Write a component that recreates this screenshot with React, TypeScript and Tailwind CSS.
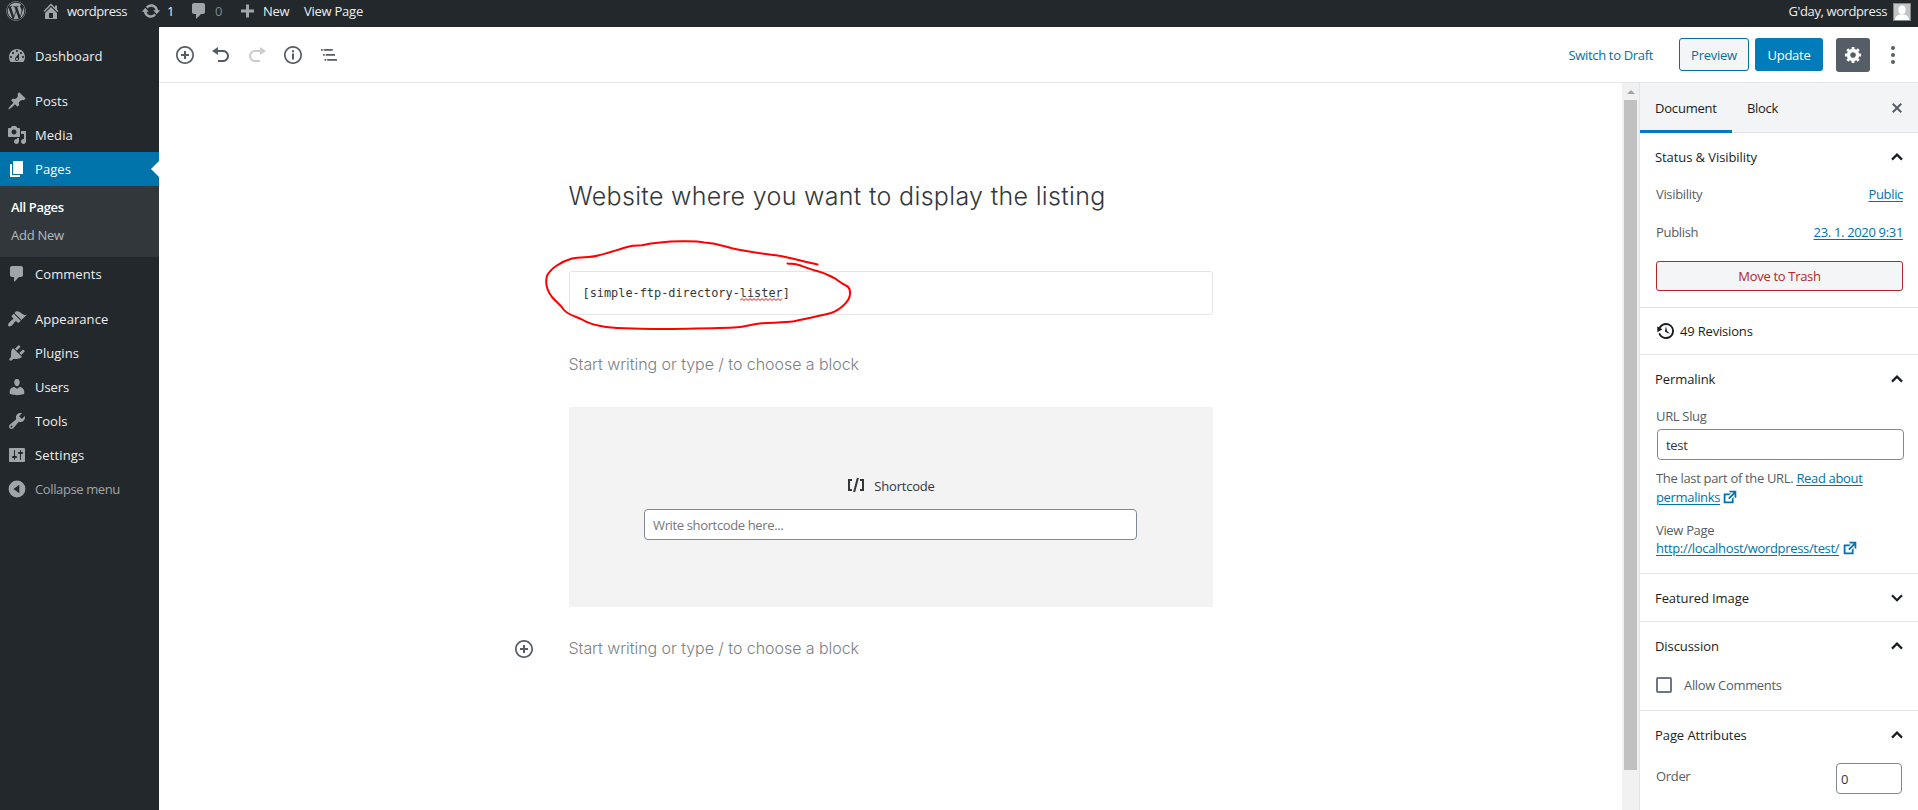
import React from "react";
import { FaWordpress } from "react-icons/fa";

const paths = {
  dashboard:
    "M3.76 16h12.48c1.1-1.37 1.76-3.11 1.76-5 0-4.42-3.58-8-8-8s-8 3.58-8 8c0 1.89.66 3.63 1.76 5zM10 4c.55 0 1 .45 1 1s-.45 1-1 1-1-.45-1-1 .45-1 1-1zM6 6c.55 0 1 .45 1 1s-.45 1-1 1-1-.45-1-1 .45-1 1-1zm8 0c.55 0 1 .45 1 1s-.45 1-1 1-1-.45-1-1 .45-1 1-1zm-5.37 5.55L12 7v6c0 1.1-.9 2-2 2s-2-.9-2-2c0-.57.24-1.08.63-1.45zM4 10c.55 0 1 .45 1 1s-.45 1-1 1-1-.45-1-1 .45-1 1-1zm12 0c.55 0 1 .45 1 1s-.45 1-1 1-1-.45-1-1 .45-1 1-1zm-5 3c0-.55-.45-1-1-1s-1 .45-1 1 .45 1 1 1 1-.45 1-1z",
  post: "M10.44 3.02l1.82-1.82 6.36 6.35-1.83 1.82c-1.05-.68-2.48-.57-3.41.36l-.75.75c-.92.93-1.04 2.35-.35 3.41l-1.83 1.82-2.41-2.41-2.8 2.79c-.42.42-3.38 2.71-3.8 2.29s1.86-3.39 2.28-3.81l2.79-2.79L4.1 9.36l1.83-1.82c1.05.69 2.48.57 3.4-.36l.75-.75c.93-.92 1.05-2.35.36-3.41z",
  media:
    "M13 11V4c0-.55-.45-1-1-1h-1.67L9 1H5L3.67 3H2c-.55 0-1 .45-1 1v7c0 .55.45 1 1 1h10c.55 0 1-.45 1-1zM7 4.5c1.38 0 2.5 1.12 2.5 2.5S8.38 9.5 7 9.5 4.5 8.38 4.5 7 5.62 4.5 7 4.5zM14 6h5v10.5c0 1.38-1.12 2.5-2.5 2.5S14 17.88 14 16.5s1.12-2.5 2.5-2.5c.17 0 .34.02.5.05V9h-3V6zm-4 8.05V13h2v3.5c0 1.38-1.12 2.5-2.5 2.5S7 17.88 7 16.5 8.12 14 9.5 14c.17 0 .34.02.5.05z",
  page: "M6 15V2h10v13H6zm-1 1h8v2H3V5h2v11z",
  comments: "M5 2h9c1.1 0 2 .9 2 2v7c0 1.1-.9 2-2 2h-2l-5 5v-5H5c-1.1 0-2-.9-2-2V4c0-1.1.9-2 2-2z",
  appearance:
    "M14.48 11.06L7.41 3.99l1.5-1.5c.5-.56 2.3-.47 3.51.32 1.21.8 1.43 1.28 2.91 2.1 1.18.64 2.45 1.26 4.45.85zm-.71.71L6.7 4.7 4.93 6.47c-.39.39-.39 1.02 0 1.41l1.06 1.06c.39.39.39 1.03 0 1.42-.6.6-1.43 1.11-2.21 1.69-.35.26-.7.53-1.01.84C1.43 14.23.4 16.08 1.4 17.07c.99 1 2.84-.03 4.18-1.36.31-.31.58-.66.85-1.02.57-.78 1.08-1.61 1.69-2.21.39-.39 1.02-.39 1.41 0l1.06 1.06c.39.39 1.02.39 1.41 0z",
  plugins:
    "M13.11 4.36L9.87 7.6 8 5.73l3.24-3.24c.35-.34 1.05-.2 1.56.32.52.51.66 1.21.31 1.55zm-8 1.77l.91-1.12 9.01 9.01-1.19.84c-.71.71-2.63 1.16-3.82 1.16H6.14L4.9 17.26c-.59.59-1.54.59-2.12 0-.59-.58-.59-1.53 0-2.12l1.24-1.24v-3.88c0-1.13.4-3.19 1.09-3.89zm7.26 3.97l3.24-3.24c.34-.35 1.04-.21 1.55.31.52.51.66 1.21.31 1.55l-3.24 3.25z",
  users:
    "M10 9.25c-2.27 0-2.73-3.44-2.73-3.44C7 4.02 7.82 2 9.97 2c2.16 0 2.98 2.02 2.71 3.81 0 0-.41 3.44-2.68 3.44zm0 2.57L12.72 10c2.39 0 4.52 2.33 4.52 4.53v2.49s-3.65 1.13-7.24 1.13c-3.65 0-7.24-1.13-7.24-1.13v-2.49c0-2.25 1.94-4.48 4.47-4.48z",
  tools:
    "M16.68 9.77c-1.34 1.34-3.3 1.67-4.95.99l-5.41 6.52c-.99.99-2.59.99-3.58 0s-.99-2.59 0-3.57l6.52-5.42c-.68-1.65-.35-3.61.99-4.95 1.28-1.28 3.12-1.62 4.72-1.06l-2.89 2.89 2.82 2.82 2.86-2.87c.53 1.58.18 3.39-1.08 4.65zM3.81 16.21c.4.39 1.04.39 1.43 0 .4-.4.4-1.04 0-1.43-.39-.4-1.03-.4-1.43 0-.39.39-.39 1.03 0 1.43z",
  settings:
    "M18 16V4c0-.55-.45-1-1-1H3c-.55 0-1 .45-1 1v12c0 .55.45 1 1 1h14c.55 0 1-.45 1-1zM8 11h1c.55 0 1 .45 1 1s-.45 1-1 1H8v1.5c0 .28-.22.5-.5.5s-.5-.22-.5-.5V13H6c-.55 0-1-.45-1-1s.45-1 1-1h1V5.5c0-.28.22-.5.5-.5s.5.22.5.5V11zm5-2h-1c-.55 0-1-.45-1-1s.45-1 1-1h1V5.5c0-.28.22-.5.5-.5s.5.22.5.5V7h1c.55 0 1 .45 1 1s-.45 1-1 1h-1v5.5c0 .28-.22.5-.5.5s-.5-.22-.5-.5V9z",
  collapse: "M10 1.600a8.400 8.400 0 1 0 0 16.800a8.400 8.400 0 1 0 0-16.800zM12.300 5.8v8.4L6.5 10z",
  home: "M16 8.5l1.53 1.53-1.06 1.06L10 4.6l-6.47 6.49-1.06-1.06L10 2.5l4 4v-2h2v4zm-6-2.46l6 5.99V18H4v-5.97zM12 17v-5H8v5h4z",
  update:
    "M10.2 3.28c3.53 0 6.43 2.61 6.92 6h2.08l-3.5 4-3.5-4h2.32c-.45-1.97-2.21-3.45-4.32-3.45-1.45 0-2.73.71-3.54 1.78L4.95 5.66C6.23 4.2 8.11 3.28 10.2 3.28zm-.4 13.44c-3.52 0-6.43-2.61-6.92-6H.8l3.5-4c1.17 1.33 2.33 2.67 3.5 4H5.48c.45 1.97 2.21 3.45 4.32 3.45 1.45 0 2.73-.71 3.54-1.78l1.71 1.95c-1.28 1.46-3.15 2.38-5.25 2.38z",
  plus: "M17 8.5v3h-5v5H9v-5H4v-3h5v-5h3v5z",
  insert:
    "M10 1c-5 0-9 4-9 9s4 9 9 9 9-4 9-9-4-9-9-9zm0 16.3c-4 0-7.3-3.3-7.3-7.3S6 2.7 10 2.7s7.3 3.3 7.3 7.3-3.3 7.3-7.3 7.3zM11 6H9v3H6v2h3v3h2v-3h3V9h-3V6z",
  undo: "M12 5H7V2L1 6l6 4V7h5c2.2 0 4 1.8 4 4s-1.8 4-4 4H7v2h5c3.3 0 6-2.7 6-6s-2.7-6-6-6z",
  redo: "M8 5h5V2l6 4-6 4V7H8c-2.2 0-4 1.8-4 4s1.8 4 4 4h5v2H8c-3.3 0-6-2.7-6-6s2.7-6 6-6z",
  info: "M10 1c-5 0-9 4-9 9s4 9 9 9 9-4 9-9-4-9-9-9zm0 16.3c-4 0-7.3-3.3-7.3-7.3S6 2.7 10 2.7s7.3 3.3 7.3 7.3-3.3 7.3-7.3 7.3zM9 5.2h2v2H9zM9 8.5h2v6H9z",
  outline: "M2 4h1.7v1.7H2zM4.7 4h9v1.7h-9zM4 9h1.7v1.7H4zM6.7 9H16v1.7H6.7zM5.5 14h1.7v1.7H5.5zM8.2 14H18v1.7H8.2z",
  generic:
    "M18 12h-2.18c-.17.7-.44 1.35-.81 1.93l1.54 1.54-2.1 2.1-1.54-1.54c-.58.36-1.23.63-1.91.79V19H8v-2.18c-.68-.16-1.33-.43-1.91-.79l-1.54 1.54-2.12-2.12 1.54-1.54c-.36-.58-.63-1.23-.79-1.91H1V9.03h2.17c.16-.7.44-1.35.8-1.94L2.43 5.55l2.1-2.1 1.54 1.54c.58-.37 1.24-.64 1.93-.81V2h3v2.18c.68.16 1.33.43 1.91.79l1.54-1.54 2.12 2.12-1.54 1.54c.36.59.64 1.24.8 1.94H18V12zm-8.5 1.5c1.66 0 3-1.34 3-3s-1.34-3-3-3-3 1.34-3 3 1.34 3 3 3z",
  more: "M10 .9a2 2 0 1 0 0 4a2 2 0 1 0 0-4zM10 8a2 2 0 1 0 0 4a2 2 0 1 0 0-4zM10 15.1a2 2 0 1 0 0 4a2 2 0 1 0 0-4z",
  close:
    "M14.95 6.46L11.41 10l3.54 3.54-1.41 1.41L10 11.42l-3.53 3.53-1.42-1.42L8.58 10 5.05 6.47l1.42-1.42L10 8.58l3.54-3.53z",
  backup:
    "M13.65 2.88c3.93 2.01 5.48 6.84 3.47 10.77s-6.83 5.48-10.77 3.47c-1.87-.96-3.2-2.56-3.86-4.4l1.64-1.03c.45 1.57 1.52 2.95 3.08 3.76 3.01 1.54 6.69.35 8.23-2.66 1.55-3.01.36-6.69-2.65-8.24C9.78 3.01 6.1 4.2 4.56 7.21l1.88.97-4.95 3.08-.39-5.82 1.78.91C4.9 2.4 9.75.89 13.65 2.88zm-4.36 7.83C9.11 10.53 9 10.28 9 10c0-.07.03-.12.04-.19h-.01L10 5l.97 4.81L14 13l-4.5-2.12.02-.02c-.08-.04-.16-.09-.23-.15z",
  external: "M9 3h8v8l-2-1V6.92l-5.6 5.59-1.41-1.41L14.08 5H10zm3 12v-3l2-2v7H3V6h8L9 8H5v7h7z",
  shortcode: "M6 14H4V6h2V4H2v12h4zM7.1 17h2.1l3.7-14h-2.1zM14 4v2h2v8h-2v2h4V4z",
};

function Icon({ name, className = "size-[19px]" }: { name: keyof typeof paths; className?: string }) {
  return (
    <svg viewBox="0 0 20 20" className={`shrink-0 fill-current ${className}`}>
      <path fillRule={name === "collapse" ? "evenodd" : "nonzero"} d={paths[name]} />
    </svg>
  );
}

function Chevron({ down = false }: { down?: boolean }) {
  return (
    <svg viewBox="0 0 12 8" className="h-2 w-3 shrink-0 fill-none stroke-[#191e23] stroke-[2.2]">
      <path d={down ? "M1 1.2L6 6.2L11 1.2" : "M1 6.6L6 1.6L11 6.6"} />
    </svg>
  );
}

function MenuItem({ icon, label, active = false, muted = false, track = "tracking-[0.06px]" }: {
  icon: keyof typeof paths; label: string; active?: boolean; muted?: boolean; track?: string;
}) {
  return (
    <div className={`relative flex h-[34px] items-center pl-[7px] ${active ? "bg-[#0073aa] text-white" : muted ? "text-[#a0a5aa]" : "text-[#eee]"}`}>
      <span className={active ? "text-white" : "text-[#a0a5aa]"}><Icon name={icon} className="size-5" /></span>
      <span className={`ml-2 pb-px ${track}`}>{label}</span>
      {active && (
        <span className="absolute right-0 top-[9px] border-y-8 border-r-8 border-y-transparent border-r-white" />
      )}
    </div>
  );
}

function PanelTitle({ label, down }: { label: string; down?: boolean }) {
  return (
    <div className="flex h-[48px] items-center justify-between pl-[15px] pr-[15px] text-[#191e23]">
      <span className="font-medium tracking-[-0.08px]">{label}</span>
      <Chevron down={down} />
    </div>
  );
}

export default function App() {
  return (
    <div className="flex h-[810px] w-[1918px] flex-col overflow-hidden bg-white font-['Open_Sans','Noto_Sans',sans-serif] text-[13px] leading-[18px]">
      <header className="flex h-[27px] shrink-0 items-center bg-[#23282d] pb-[5px] text-[#eee]">
        <FaWordpress className="ml-[6px] size-5 text-[#a0a5aa]" />
        <Icon name="home" className="ml-[15px] size-5 text-[#a0a5aa]" />
        <span className="ml-[6px] w-[60px] whitespace-nowrap tracking-[-0.45px]">wordpress</span>
        <Icon name="update" className="ml-[14px] size-5 text-[#a0a5aa]" />
        <span className="ml-[6px] w-[8px]">1</span>
        <Icon name="comments" className="ml-[14px] size-5 text-[#a0a5aa]" />
        <span className="ml-[6px] w-[8px] text-[#82878c]">0</span>
        <Icon name="plus" className="ml-[14px] size-5 text-[#a0a5aa]" />
        <span className="ml-[6px] w-[26px] tracking-[-0.3px]">New</span>
        <span className="ml-[15px] tracking-[-0.25px]">View Page</span>
        <span className="ml-auto tracking-[-0.4px]">G'day, wordpress</span>
        <span className="ml-[6px] mr-[7px] mt-[1px] flex size-[18px] items-end justify-center border border-[#82878c] bg-[#c4c4c4]">
          <svg viewBox="0 0 16 16" className="size-4 fill-white">
            <ellipse cx="8" cy="6" rx="3.6" ry="4.4" />
            <path d="M1 16c0-4 3-5 5-5.500h4c2 .5 5 1.500 5 5.500z" />
          </svg>
        </span>
      </header>

      <div className="flex min-h-0 flex-1">
        <nav className="w-[159px] shrink-0 bg-[#23282d] pt-[12px]">
          <MenuItem icon="dashboard" label="Dashboard" />
          <div className="h-[11px]" />
          <MenuItem icon="post" label="Posts" />
          <MenuItem icon="media" label="Media" />
          <MenuItem icon="page" label="Pages" active />
          <div className="flex h-[71px] flex-col bg-[#32373c] pl-[11px] pt-[7px]">
            <span className="flex h-[28px] items-center font-semibold tracking-[-0.35px] text-white">All Pages</span>
            <span className="flex h-[28px] items-center tracking-[-0.25px] text-[#b4b9be]">Add New</span>
          </div>
          <MenuItem icon="comments" label="Comments" />
          <div className="h-[11px]" />
          <MenuItem icon="appearance" label="Appearance" />
          <MenuItem icon="plugins" label="Plugins" />
          <MenuItem icon="users" label="Users" track="tracking-[-0.1px]" />
          <MenuItem icon="tools" label="Tools" />
          <MenuItem icon="settings" label="Settings" track="tracking-[0.15px]" />
          <MenuItem icon="collapse" label="Collapse menu" muted track="tracking-[-0.38px]" />
        </nav>

        <div className="flex min-w-0 flex-1 flex-col">
          <div className="flex h-[56px] shrink-0 items-center border-b border-[#e2e4e7] pl-4 text-[#555d66]">
            <Icon name="insert" className="size-5" />
            <Icon name="undo" className="ml-4 size-5" />
            <Icon name="redo" className="ml-4 size-5 opacity-30" />
            <Icon name="info" className="ml-4 size-5" />
            <Icon name="outline" className="ml-4 size-5" />
            <span className="ml-auto mr-[26px] tracking-[-0.33px] text-[#0071a1]">Switch to Draft</span>
            <button className="h-[33px] w-[70px] rounded-[3px] border border-[#0071a1] bg-[#f3f5f6] tracking-[-0.25px] text-[#0071a1]">Preview</button>
            <button className="ml-[6px] h-[33px] w-[68px] rounded-[3px] bg-[#007cba] font-medium tracking-[-0.25px] text-white">Update</button>
            <button className="ml-[13px] flex size-[34px] items-center justify-center rounded-[3px] bg-[#555d66] text-white">
              <Icon name="generic" className="size-[19px]" />
            </button>
            <Icon name="more" className="ml-[13px] mr-[15px] size-5" />
          </div>

          <div className="flex min-h-0 flex-1">
            <main className="flex min-w-0 flex-1 flex-col items-center">
              <div className="relative w-[644px] pt-[94px]">
                <h1 className="flex h-[38px] items-center whitespace-nowrap pb-px font-['Inter'] text-[25px] font-light tracking-[0.33px] text-[#32373c]">
                  Website where you want to display the listing
                </h1>
                <div className="mt-[56px] flex h-[44px] items-center rounded-[3px] border border-[#e2e4e7] pl-[13px] font-['DejaVu_Sans_Mono'] text-[11.88px] text-[#32373c]">
                  [simple-ftp-directory-
                  <span className="relative">
                    lister
                    <svg viewBox="0 0 43 3" className="absolute bottom-[1px] left-0 h-[3px] w-[43px] fill-none stroke-[#f00]">
                      <path d="M0 2.500L2 .5L4 2.500L6 .5L8 2.500L10 .5L12 2.500L14 .5L16 2.500L18 .5L20 2.500L22 .5L24 2.500L26 .5L28 2.500L30 .5L32 2.500L34 .5L36 2.500L38 .5L40 2.500L42 .5" />
                    </svg>
                  </span>
                  ]
                </div>
                <p className="mt-[37px] flex h-[24px] items-center whitespace-nowrap font-['Inter'] text-[16px] font-light tracking-[-0.05px] text-[#7b7f83]">
                  Start writing or type / to choose a block
                </p>
                <section className="mt-[31px] flex h-[200px] flex-col items-center bg-[#f3f3f3] pt-[68px]">
                  <div className="flex h-[20px] items-center text-[#32373c]">
                    <Icon name="shortcode" className="size-5" />
                    <span className="ml-2 pt-[2px] font-medium tracking-[-0.2px]">Shortcode</span>
                  </div>
                  <div className="mt-[14px] flex h-[31px] w-[493px] items-center rounded-[4px] border border-[#7e8993] bg-white pl-2 tracking-[-0.36px] text-[#72777c]">
                    Write shortcode here...
                  </div>
                </section>
                <div className="-ml-[55px] mt-[30px] flex h-[24px] items-center text-[#555d66]">
                  <Icon name="insert" className="size-5" />
                  <p className="ml-[35px] whitespace-nowrap pb-[2px] font-['Inter'] text-[16px] font-light tracking-[-0.05px] text-[#7b7f83]">
                    Start writing or type / to choose a block
                  </p>
                </div>
                <svg viewBox="540 235 320 100" className="absolute -left-[29px] top-[152px] h-[100px] w-[320px] fill-none stroke-[#f00] stroke-2">
                  <path
                    strokeLinecap="round"
                    strokeLinejoin="round"
                    d="M817.500 264.500C805 262 790 257.500 776 255.300C760 253 745 251.500 732 248.300C720 245 714 243 704.500 242.500C697 241 690 241.300 681.500 241.300C665 241.500 648 244 642 245.300C637 245.600 634 245 629 246.500C618 249.500 610 252.500 598 255.500C589 258 582 256.500 572 258.500C561 261.500 550 269 547 276C545 283 546 289 552 297C557 303 560 304 564 310C568 315 578 317 583 320C589 324 596 325 602 326.300C611 328 640 329 663 329C690 328.500 722 328.500 737 327.300C746 326.500 752 324 762 323.300C775 322.500 785 322.500 794 321.300C807 318.500 819 316 831 313C840 310 850 301 850 294C850 290 850 287 845 285C839 282 837 279 833 277.500C827 274.500 824 272.500 817 271C810 269.500 803 266 797 264.500C793 263.500 791 264 787.500 263.500"
                  />
                </svg>
              </div>
            </main>

            <div className="flex w-[17px] shrink-0 flex-col items-center bg-[#f1f1f1]">
              <span className="mt-[7px] border-x-4 border-b-4 border-x-transparent border-b-[#a3a3a3]" />
              <span className="mt-[6px] h-[670px] w-[13px] bg-[#c1c1c1]" />
            </div>

            <aside className="w-[279px] shrink-0 border-l border-[#e2e4e7] tracking-[-0.33px] text-[#555d66]">
              <div className="flex h-[50px] border-b border-[#e2e4e7] bg-[#f3f4f5] text-[#191e23]">
                <span className="flex h-[50px] w-[92px] items-center border-b-[3px] border-[#007cba] pl-[15px] pt-[3px] font-medium tracking-[-0.2px]">Document</span>
                <span className="flex items-center pl-[15px]">Block</span>
                <span className="ml-auto mr-[11px] flex items-center text-[#555d66]"><Icon name="close" className="size-5" /></span>
              </div>

              <div className="h-[175px] border-b border-[#e2e4e7]">
                <PanelTitle label="Status & Visibility" />
                <div className="flex h-[26px] items-center justify-between px-4 pr-[15px]">
                  <span>Visibility</span>
                  <a className="text-[#0073aa] underline underline-offset-2">Public</a>
                </div>
                <div className="mt-[12px] flex h-[26px] items-center justify-between px-4 pr-[15px]">
                  <span>Publish</span>
                  <a className="text-[#0073aa] underline underline-offset-2">23. 1. 2020 9:31</a>
                </div>
                <button className="ml-4 mt-[16px] block h-[30px] w-[247px] rounded-[3px] border border-[#b52727] bg-[#f3f5f6] tracking-[-0.31px] text-[#b52727]">Move to Trash</button>
              </div>

              <div className="flex h-[47px] items-center border-b border-[#e2e4e7] pl-4 font-medium tracking-[-0.18px] text-[#191e23]">
                <Icon name="backup" className="size-5" />
                <span className="ml-1">49 Revisions</span>
              </div>

              <div className="h-[219px] border-b border-[#e2e4e7]">
                <PanelTitle label="Permalink" />
                <div className="ml-4 mt-[4px] h-[22px]">URL Slug</div>
                <div className="ml-[17px] flex h-[31px] w-[247px] items-center rounded-[4px] border border-[#7e8993] pl-2 text-[#32373c]">test</div>
                <p className="ml-4 mt-[9px] h-[38px] whitespace-nowrap leading-[19px]">
                  The last part of the URL. <a className="text-[#0073aa] underline underline-offset-2">Read about<br />permalinks</a>
                  <Icon name="external" className="ml-[1px] inline-block size-[18px] align-[-4px] text-[#0073aa]" />
                </p>
                <p className="ml-4 mt-[14px] whitespace-nowrap">
                  View Page<br />
                  <a className="text-[#0073aa] underline underline-offset-2">http://localhost/wordpress/<span className="font-medium">test/</span></a>
                  <Icon name="external" className="ml-[2px] inline-block size-[18px] align-[-4px] text-[#0073aa]" />
                </p>
              </div>

              <div className="h-[48px] border-b border-[#e2e4e7]">
                <PanelTitle label="Featured Image" down />
              </div>

              <div className="h-[89px] border-b border-[#e2e4e7]">
                <PanelTitle label="Discussion" />
                <div className="flex h-[30px] items-center pl-4">
                  <span className="size-4 rounded-[2px] border-2 border-[#6c7781] bg-white" />
                  <span className="ml-[12px]">Allow Comments</span>
                </div>
              </div>

              <div>
                <PanelTitle label="Page Attributes" />
                <div className="flex items-center pl-4 pr-4 pt-[4px]">
                  <span className="mb-[6px]">Order</span>
                  <span className="ml-auto flex h-[31px] w-[66px] items-center rounded-[4px] border border-[#7e8993] pl-1 text-[#32373c]">0</span>
                </div>
              </div>
            </aside>
          </div>
        </div>
      </div>
    </div>
  );
}
